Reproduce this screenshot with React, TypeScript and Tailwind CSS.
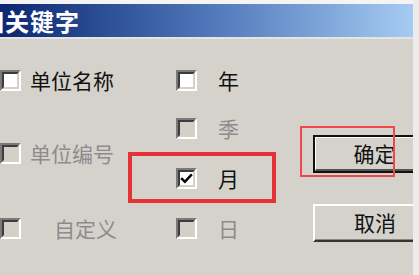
import type { ReactNode } from 'react';

const cjk = { fontFamily: '"Noto Sans CJK SC", "Noto Sans", sans-serif' };

function Box({ checked, enabled }: { checked?: boolean; enabled?: boolean }) {
  return (
    <div className="w-[21px] h-[21px] shrink-0 border-2 border-t-[#7a7a7a] border-l-[#7a7a7a] border-b-white border-r-white">
      <div
        className={`w-full h-full border-2 border-t-[#3c3c3c] border-l-[#3c3c3c] border-b-[#d4d0c8] border-r-[#d4d0c8] flex items-center justify-center ${
          enabled ? 'bg-white' : 'bg-[#d4d0c8]'
        }`}
      >
        {checked && (
          <svg viewBox="0 0 16 16" className="w-[15px] h-[15px]">
            <path d="M2.5 8.5 L6 12 L13.5 4" fill="none" stroke="#000" strokeWidth="3" strokeLinecap="square" />
          </svg>
        )}
      </div>
    </div>
  );
}

function Option({
  label,
  enabled,
  checked,
  gap,
  className = '',
}: {
  label: ReactNode;
  enabled?: boolean;
  checked?: boolean;
  gap: string;
  className?: string;
}) {
  return (
    <div className={`flex items-center h-[24px] ${gap} ${className}`}>
      <Box enabled={enabled} checked={checked} />
      <span
        className={`text-[21px] leading-[24px] whitespace-nowrap ${
          enabled ? 'text-[#111]' : 'text-[#8c8c8c]'
        }`}
      >
        {label}
      </span>
    </div>
  );
}

function Button({ label, primary }: { label: string; primary?: boolean }) {
  return (
    <div
      className={`w-[122px] h-[38px] shrink-0 ${
        primary ? 'border-2 border-[#111]' : 'border-t-2 border-l-2 border-t-white border-l-white border-b-2 border-b-[#333]'
      }`}
    >
      <div
        className={`w-full h-full flex items-center justify-center text-[21px] text-[#111] ${
          primary ? 'border-t border-l border-t-white border-l-white border-b-2 border-b-[#555]' : 'border-b border-b-[#888]'
        }`}
      >
        {label}
      </div>
    </div>
  );
}

export default function App() {
  return (
    <div className="w-[419px] h-[275px] flex bg-white overflow-hidden" style={cjk}>
      <div className="relative w-[413px] h-full flex flex-col bg-[#d5d2cc] overflow-hidden">
        <div className="h-[4px] bg-[#f4f4f4] shrink-0" />
        <div className="h-[33px] shrink-0 bg-gradient-to-r from-[#0c2672] via-[#4f76b8] to-[#a6cbf2] flex items-center overflow-hidden">
          <span className="ml-[-20px] text-white text-[24px] font-bold leading-none tracking-[1px]">相关键字</span>
        </div>
        <div className="h-[2px] bg-[#e6e4df] shrink-0" />

        <div className="flex flex-1 pt-[29px]">
          <div className="flex flex-col w-[176px] shrink-0">
            <Option label="单位名称" enabled gap="gap-[9px]" />
            <Option label="单位编号" gap="gap-[9px]" className="mt-[49px]" />
            <Option label="自定义" gap="gap-[33px]" className="mt-[51px]" />
          </div>
          <div className="flex flex-col w-[137px] shrink-0">
            <Option label="年" enabled gap="gap-[21px]" />
            <Option label="季" gap="gap-[21px]" className="mt-[24px]" />
            <Option label="月" enabled checked gap="gap-[21px]" className="mt-[26px]" />
            <Option label="日" gap="gap-[21px]" className="mt-[26px]" />
          </div>
          <div className="flex flex-col pt-[67px] gap-[31px]">
            <Button label="确定" primary />
            <Button label="取消" />
          </div>
        </div>

        <div className="absolute left-[128px] top-[152px] w-[148px] h-[51px] border-[4px] border-[#e53238]" />
        <div className="absolute left-[300px] top-[126px] w-[95px] h-[51px] border-2 border-[#f0474c]" />
      </div>
      <div className="flex-1 bg-[#ececec]" />
    </div>
  );
}
